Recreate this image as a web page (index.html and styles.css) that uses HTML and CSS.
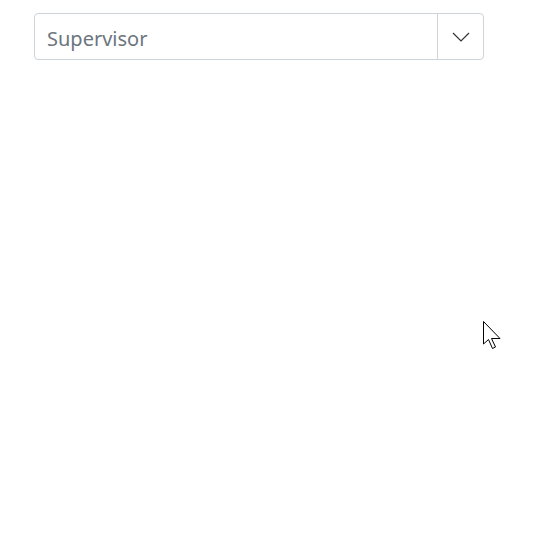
FILE: index.html
```html
<!DOCTYPE html>
<html>
<head>
<meta charset="utf-8">
<link rel="stylesheet" href="styles.css">
</head>
<body>
<div class="page">
  <div class="combo">
    <div class="combo-input">Supervisor</div>
    <div class="combo-btn">
      <svg width="18" height="10" viewBox="0 0 18 10"><path d="M1 1 L9 9 L17 1" fill="none" stroke="#333" stroke-width="1.2"/></svg>
    </div>
  </div>
</div>
<svg class="cursor" width="22" height="32" viewBox="0 0 22 32"><path d="M0.5 0.5 L0.5 23 L5.5 18.5 L9.5 27.5 L12.5 26 L8.5 17.5 L17 17.5 Z" fill="#fff" stroke="#000" stroke-width="1" stroke-linejoin="miter"/></svg>
</body>
</html>
```
FILE: styles.css
```css
html, body { margin: 0; padding: 0; background: #fff; }
body { width: 551px; height: 537px; position: relative; overflow: hidden; }
.page { padding: 13px 0 0 34px; }
.combo {
  display: flex;
  width: 450px;
  height: 47px;
  box-sizing: border-box;
  border: 1px solid #ced4da;
  border-radius: 4px;
}
.combo-input {
  flex: 1;
  display: flex;
  align-items: center;
  padding: 3px 0 0 12px;
  font-family: "Noto Sans", "Open Sans", sans-serif;
  font-size: 20px;
  color: #6c757d;
  border-right: 1px solid #ced4da;
}
.combo-btn {
  width: 45px;
  display: flex;
  align-items: center;
  justify-content: center;
}
.cursor { position: absolute; left: 483px; top: 321px; }
```
